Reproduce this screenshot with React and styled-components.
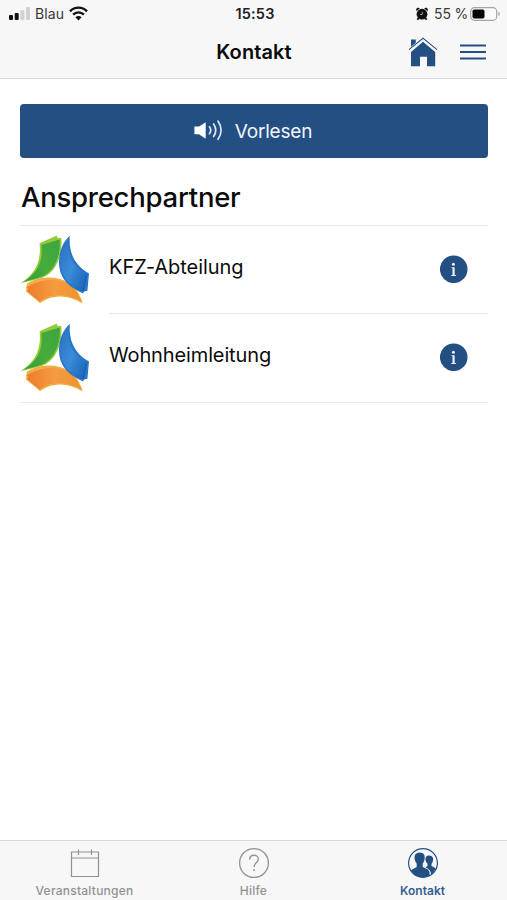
import React from "react";
import styled, { createGlobalStyle } from "styled-components";

const BLUE = "#234f83";

const GlobalStyle = createGlobalStyle`
  *, *::before, *::after { box-sizing: border-box; }
  body { margin: 0; background: #fff; }
  h1, h2, ul { margin: 0; padding: 0; }
  svg { display: block; flex: none; }
`;

const Screen = styled.div`
  display: flex;
  flex-direction: column;
  width: 100%;
  height: 100vh;
  overflow: hidden;
  background: #fff;
  color: #0b0b0b;
  font-family: Inter, "Liberation Sans", sans-serif;
`;

const Header = styled.header`
  flex: none;
  height: 79px;
  background: #f7f7f7;
  border-bottom: 1px solid #d9d9d9;
`;

const HeaderRow = styled.div`
  display: grid;
  grid-template-columns: 1fr auto 1fr;
  align-items: center;
`;

const StatusBar = styled(HeaderRow)`
  height: 27px;
  padding: 0 6px 0 9px;
  font-size: 14px;
  line-height: 18px;
  color: #3a3a3a;
`;

const NavBar = styled(HeaderRow)`
  height: 50px;
  padding: 0 21px;
`;

const Cluster = styled.div`
  display: flex;
  align-items: center;
  justify-content: ${(p) => (p.$end ? "flex-end" : "flex-start")};
  gap: ${(p) => p.$gap || 0}px;
`;

const StatusText = styled.span`
  letter-spacing: ${(p) => p.$track || 0}px;
  white-space: nowrap;
`;

const Clock = styled.time`
  font-size: 14.5px;
  font-weight: 600;
  letter-spacing: 0.2px;
  color: #202020;
`;

const Title = styled.h1`
  grid-column: 2;
  padding-left: 1px;
  font-size: 20px;
  line-height: 24px;
  font-weight: 600;
  letter-spacing: 0.1px;
`;

const IconButton = styled.button`
  display: block;
  padding: 0;
  border: 0;
  background: none;
  color: ${BLUE};
`;

const Content = styled.main`
  flex: 1;
  padding: 25px 19px 0 20px;
`;

const ReadButton = styled.button`
  display: flex;
  align-items: center;
  justify-content: center;
  gap: 11px;
  width: 100%;
  height: 54px;
  padding: 0 2px 0 0;
  border: 0;
  border-radius: 4px;
  background: ${BLUE};
  color: #f1f6fc;
  font: 400 19px/24px Inter, "Liberation Sans", sans-serif;
  letter-spacing: -0.2px;
`;

const ReadLabel = styled.span`
  padding-top: 2px;
`;

const SectionTitle = styled.h2`
  height: 68px;
  padding: 21px 0 0 1px;
  border-bottom: 1px solid #e8e8e8;
  font-size: 27.5px;
  line-height: 36px;
  font-weight: 500;
  letter-spacing: -0.25px;
`;

const ContactList = styled.ul`
  list-style: none;
  border-bottom: 1px solid #e8e8e8;
`;

const ContactItem = styled.li`
  display: flex;
  height: 88px;
`;

const LogoCell = styled.div`
  width: 89px;
  padding-top: 8px;
`;

const ContactBody = styled.div`
  display: flex;
  flex: 1;
  align-items: flex-start;
  justify-content: space-between;
  padding: 29px 20px 0 0;
  border-bottom: 1px solid ${(p) => (p.$last ? "transparent" : "#e8e8e8")};
`;

const ContactName = styled.span`
  margin-top: -1px;
  font-size: 20px;
  line-height: 26px;
  letter-spacing: ${(p) => p.$track}px;
`;

const TabBar = styled.nav`
  display: grid;
  grid-template-columns: repeat(3, 1fr);
  flex: none;
  height: 60px;
  border-top: 1px solid #d9d9d9;
  background: #f7f7f7;
`;

const Tab = styled.a`
  display: flex;
  flex-direction: column;
  align-items: center;
  padding-top: 6px;
  color: ${(p) => (p.$active ? "#355e91" : "#929292")};
  font-size: 12px;
  line-height: 16px;
  font-weight: ${(p) => (p.$active ? 600 : 500)};
  letter-spacing: ${(p) => p.$track}px;

  svg { margin-bottom: 4px; }
`;

function Signal() {
  return (
    <svg width="21" height="14" viewBox="0 0 21 14">
      <rect x="0" y="8" width="4" height="5" rx="1" fill="#111" />
      <rect x="5.7" y="6" width="4" height="7" rx="1" fill="#111" />
      <rect x="11.4" y="3" width="4" height="10" rx="1" fill="#d2d2d2" />
      <rect x="17" y="0" width="4" height="13" rx="1" fill="#d2d2d2" />
    </svg>
  );
}

function Wifi() {
  return (
    <svg width="19" height="15" viewBox="0 0 19 15" fill="none" stroke="#111" strokeWidth="2.4">
      <path d="M1 5.3C5.8.4 13.2.4 18 5.3" />
      <path d="M4.1 8.6C7.2 5.6 11.8 5.6 14.9 8.6" />
      <path d="M9.5 14.4 6.4 11.2C8.2 9.6 10.8 9.6 12.6 11.2Z" fill="#111" stroke="none" />
    </svg>
  );
}

function Alarm() {
  return (
    <svg width="12" height="14" viewBox="0 0 12 14">
      <path d="M.3 4.2V2.1C.7.8 2.7.4 3.8 1.5ZM11.7 4.2V2.1C11.3.8 9.3.4 8.2 1.5Z" fill="#111" />
      <circle cx="6" cy="7.2" r="5.4" fill="#111" />
      <path d="m2.6 11-1.2 1.8M9.4 11l1.2 1.8" stroke="#111" strokeWidth="1.8" />
      <path d="M6.3 4.8v2.7H4" fill="none" stroke="#b8b8b8" strokeWidth=".8" />
    </svg>
  );
}

function Battery() {
  return (
    <svg width="31" height="14" viewBox="0 0 31 14">
      <rect x=".7" y=".7" width="26" height="12.6" rx="3.8" fill="#fafafa" stroke="#a5a5a5" strokeWidth="1.2" />
      <rect x="2.5" y="2.5" width="12" height="9" rx="1.8" fill="#050505" />
      <path d="M28.3 4.8c2 .6 2 3.8 0 4.4Z" fill="#aaa" />
    </svg>
  );
}

function House() {
  return (
    <svg width="30" height="30" viewBox="0 0 30 30" fill="currentColor">
      <path d="M3 2.4h4.8v3.4L3 9.8Z" />
      <path d="M15 4.8 27.2 15v14.2h-8.2v-9.4h-7v9.4H3V15Z" />
      <path d="M1 12.6 15 1.2 29 12.6" fill="none" stroke="currentColor" strokeWidth="1.1" />
      <path d="M1.8 13.7 15 2.9 28.2 13.7" fill="none" stroke="#f1f5fa" strokeWidth="1.1" />
    </svg>
  );
}

function Menu() {
  return (
    <svg width="26" height="17" viewBox="0 0 26 17" fill="currentColor">
      <rect y=".5" width="26" height="2" />
      <rect y="7" width="26" height="2" />
      <rect y="13.5" width="26" height="2" />
    </svg>
  );
}

function Speaker() {
  return (
    <svg width="30" height="24" viewBox="0 0 30 24">
      <path d="M.4 7.6h4.6L11.7 3.2v16.6L5 15.2H.4Z" fill="#fff" />
      <g fill="none" stroke="#dce8f5" strokeWidth="1.7" strokeLinecap="round">
        <path d="M15.4 7.8Q18.2 11.3 15.4 14.7" />
        <path d="M19.6 5Q24 11.3 19.6 17.5" />
        <path d="M24 2.1Q30.2 11.3 24 20.3" />
      </g>
    </svg>
  );
}

function CompanyLogo({ id }) {
  return (
    <svg width="70" height="72" viewBox="0 0 70 72">
      <defs>
        <linearGradient id={`${id}-green`} x1="1" y1="0" x2="0" y2="1">
          <stop offset="0" stopColor="#3ba540" />
          <stop offset=".55" stopColor="#47ac3b" />
          <stop offset="1" stopColor="#2f9c40" />
        </linearGradient>
        <linearGradient id={`${id}-blue`} x1="0" y1="0" x2="1" y2="1">
          <stop offset="0" stopColor="#2c6fc0" />
          <stop offset=".5" stopColor="#3a8cd8" />
          <stop offset="1" stopColor="#1760b4" />
        </linearGradient>
        <linearGradient id={`${id}-orange`} x1="0" y1="0" x2="1" y2="0">
          <stop offset="0" stopColor="#ee7c29" />
          <stop offset=".5" stopColor="#f59b42" />
          <stop offset="1" stopColor="#ef932e" />
        </linearGradient>
      </defs>
      <path d="M19.6 9.3 36.8 1.6 37.6 4.2 41.2 3.8C43 21 36 40 20 44.6L.6 49.3C14.5 40 21.5 29 19.6 9.3Z" fill="#93cb37" />
      <path d="M21.5 11 39.6 5.6C41.2 21 34.5 39 19.5 43.6L3 48C17 40 23.2 28 21.5 11Z" fill={`url(#${id}-green)`} />
      <path d="M6 57.6 7 49.4C20 41.6 38 41.5 49 49 56 54 60 60 62.8 69.5 48 60.5 33 60 20 69Z" fill="#f4ac45" />
      <path d="M7.4 57.5 8.4 52.4C21 45 37 43.4 48 50 54.5 54.2 58.5 60 61.4 67.5 47 59 32 58.8 19.6 67.2Z" fill={`url(#${id}-orange)`} />
      <path d="m6.2 53.5 3.2-.8 11 15.4" fill="none" stroke="#ef8030" strokeWidth=".9" />
      <path d="M49.8 1.7C48.6 18 54 31 69 39.6L67.4 57 63.6 57.4 63.2 59.5C49 53.5 39.2 44 39 29 38.9 17 43 8 49.8 1.7Z" fill="#2876c8" />
      <path d="M48.6 5C46.8 19 52 32 66 41.2L62.6 57.6C49 51.5 40.6 42 40.5 28 40.6 18 43.6 10 48.6 5Z" fill={`url(#${id}-blue)`} />
      <path d="m66.2 41.5-3 16.2" fill="none" stroke="#1558a6" strokeWidth="1" />
    </svg>
  );
}

function Info() {
  return (
    <svg width="28" height="28" viewBox="0 0 28 28">
      <circle cx="13.7" cy="14.3" r="13.8" fill={BLUE} />
      <circle cx="13.4" cy="9.2" r="1.5" fill="#e8eff8" />
      <path d="M11.5 12.3h3.2V20h1.2v.9h-4.6V20h1.2v-6.8h-1Z" fill="#e8eff8" />
    </svg>
  );
}

function Calendar() {
  return (
    <svg width="30" height="32" viewBox="0 0 30 32" fill="none" stroke="currentColor" strokeWidth="1.2">
      <path d="M1.5 5h27v24.5h-27ZM1.5 11h27M8.5 2.5v5.5M21.5 2.5v5.5" />
    </svg>
  );
}

function Help() {
  return (
    <svg width="32" height="32" viewBox="0 0 32 32" fill="none" stroke="currentColor">
      <circle cx="16" cy="16" r="14.4" strokeWidth="1.3" />
      <path d="M11.6 12.6C11.7 10 13.5 8.3 16 8.3S20.4 10 20.4 12.2C20.4 15.4 16 15.8 16 19.9" strokeWidth="1.4" />
      <circle cx="16" cy="22.9" r="1" fill="currentColor" stroke="none" />
    </svg>
  );
}

function People() {
  return (
    <svg width="32" height="32" viewBox="0 0 32 32">
      <circle cx="16" cy="16" r="14.4" fill="none" stroke={BLUE} strokeWidth="1.2" />
      <path d="M18.5 20.2 20.5 19v-2.3C18.4 15 18 12 18.7 10.5 20 7.7 25 8 26 11c.4 2-.1 4.2-1.5 5.7V19l4.2 2.2C27.4 24 26 26.2 24.2 27.6 23.8 23.2 21.5 22 18.5 20.2Z" fill={BLUE} />
      <path d="M9.7 20V16.6C7.4 14 7 9.5 8.3 7.5 10 4.7 15.3 4.8 17 7.4 18.5 10 17.5 14.5 15.7 16.6V20C18.5 21.4 21.8 22 22.5 25.5L22.8 28.2C17 32 8 31 3.4 23.4Z" fill={BLUE} />
    </svg>
  );
}

const contacts = [
  { name: "KFZ-Abteilung", id: "kfz", track: -0.05 },
  { name: "Wohnheimleitung", id: "wohnheim", track: -0.13 },
];

const tabs = [
  { label: "Veranstaltungen", Icon: Calendar, track: 0.24 },
  { label: "Hilfe", Icon: Help, track: 0.2 },
  { label: "Kontakt", Icon: People, active: true, track: 0.05 },
];

export default function App() {
  return (
    <Screen>
      <GlobalStyle />
      <Header>
        <StatusBar>
          <Cluster $gap={5}>
            <Signal />
            <StatusText $track={0.1}>Blau</StatusText>
            <Wifi />
          </Cluster>
          <Clock>15:53</Clock>
          <Cluster $end $gap={2}>
            <Cluster $gap={6}>
              <Alarm />
              <StatusText $track={-0.2}>55 %</StatusText>
            </Cluster>
            <Battery />
          </Cluster>
        </StatusBar>
        <NavBar>
          <Title>Kontakt</Title>
          <Cluster $end $gap={22}>
            <IconButton aria-label="Startseite"><House /></IconButton>
            <IconButton aria-label="Menü"><Menu /></IconButton>
          </Cluster>
        </NavBar>
      </Header>
      <Content>
        <ReadButton><Speaker /><ReadLabel>Vorlesen</ReadLabel></ReadButton>
        <SectionTitle>Ansprechpartner</SectionTitle>
        <ContactList>
          {contacts.map((contact, index) => (
            <ContactItem key={contact.id}>
              <LogoCell><CompanyLogo id={contact.id} /></LogoCell>
              <ContactBody $last={index === contacts.length - 1}>
                <ContactName $track={contact.track}>{contact.name}</ContactName>
                <IconButton aria-label="Informationen"><Info /></IconButton>
              </ContactBody>
            </ContactItem>
          ))}
        </ContactList>
      </Content>
      <TabBar>
        {tabs.map(({ label, Icon, active, track }) => (
          <Tab key={label} $active={active} $track={track}>
            <Icon />
            {label}
          </Tab>
        ))}
      </TabBar>
    </Screen>
  );
}
